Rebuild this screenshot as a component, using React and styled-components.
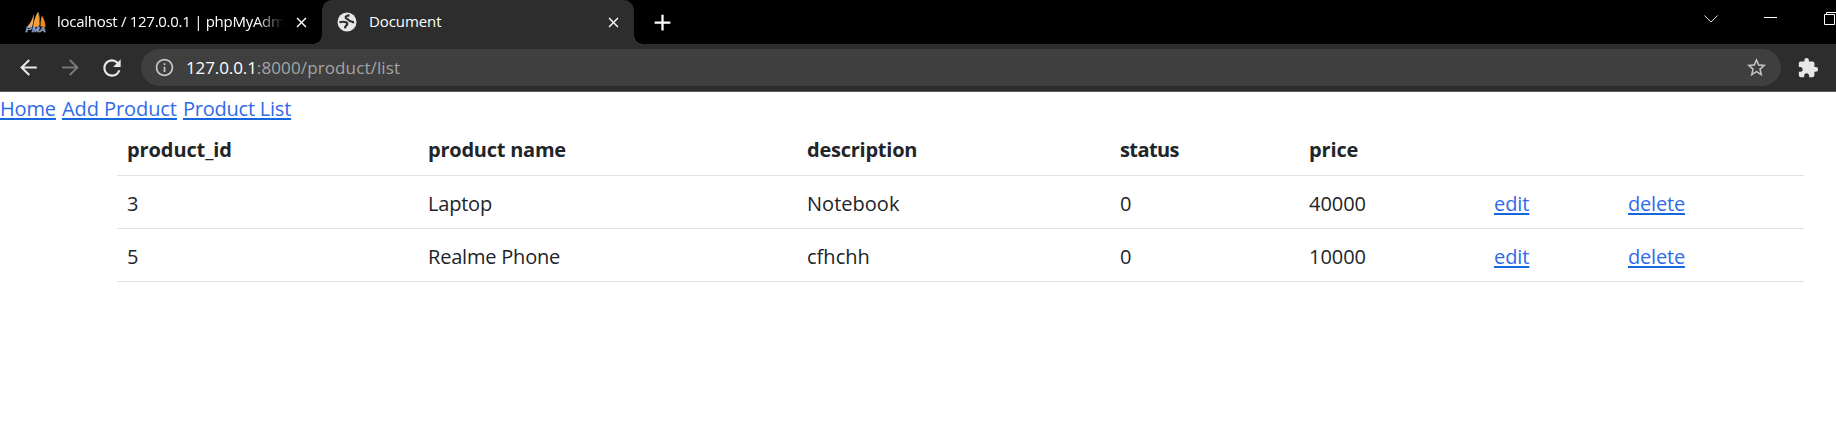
import React from "react";
import styled, { createGlobalStyle, css } from "styled-components";
import {
  MdArrowBack,
  MdArrowForward,
  MdRefresh,
  MdInfoOutline,
  MdStarBorder,
  MdExtension,
  MdClose,
  MdAdd,
} from "react-icons/md";

const GlobalStyle = createGlobalStyle`
  * { box-sizing: border-box; }
  body {
    margin: 0;
    overflow: hidden;
    background: #fff;
    color: #212529;
    font-family: "Open Sans", "Noto Sans", sans-serif;
  }
  svg { display: block; flex: none; }
`;

const Window = styled.div`
  display: flex;
  flex-direction: column;
  width: 1836px;
  height: 435px;
  overflow: hidden;
`;

const TabStrip = styled.div`
  display: flex;
  height: 44px;
  background: #000;
  color: #fff;
`;

const flare = css`
  content: "";
  position: absolute;
  bottom: 0;
  width: 9px;
  height: 9px;
`;

const Tab = styled.div`
  position: relative;
  display: flex;
  align-items: center;
  flex: none;
  width: ${(p) => (p.$active ? 312 : 322)}px;
  padding: 0 12px 0 ${(p) => (p.$active ? 15 : 25)}px;
  border-radius: 10px 10px 0 0;
  background: ${(p) => (p.$active ? "#2d2d2d" : "transparent")};

  ${(p) =>
    p.$active &&
    css`
      &::before {
        ${flare}
        left: -9px;
        background: radial-gradient(circle at 0 0, transparent 8.5px, #2d2d2d 9px);
      }
      &::after {
        ${flare}
        right: -9px;
        background: radial-gradient(circle at 100% 0, transparent 8.5px, #2d2d2d 9px);
      }
    `}
`;

const TabTitle = styled.span`
  flex: 1;
  min-width: 0;
  margin: 0 9px 0 ${(p) => (p.$fade ? 10 : 12)}px;
  padding-bottom: 2px;
  overflow: hidden;
  white-space: nowrap;
  font-size: 15px;
  line-height: 22px;
  letter-spacing: ${(p) => (p.$fade ? -0.28 : -0.08)}px;
  ${(p) =>
    p.$fade &&
    css`
      mask-image: linear-gradient(to right, #000 calc(100% - 28px), transparent);
    `}
`;

const NewTab = styled.div`
  display: flex;
  align-items: center;
  margin-left: 15px;
`;

const WindowControls = styled.div`
  display: flex;
  align-items: flex-start;
  gap: 46px;
  height: 30px;
  margin-left: auto;
  padding-top: 11px;
`;

const Toolbar = styled.div`
  display: flex;
  align-items: center;
  height: 48px;
  padding: 0 16px;
  background: #2d2d2d;
  border-bottom: 1px solid #585858;
  color: #e6e6e6;
`;

const NavButtons = styled.div`
  display: flex;
  align-items: center;
  gap: 16.5px;
  width: 125px;
`;

const NavIcon = styled.span`
  display: flex;
  color: ${(p) => (p.$disabled ? "#777" : "#e8e8e8")};
`;

const AddressBar = styled.div`
  display: flex;
  align-items: center;
  width: 1640px;
  height: 37px;
  padding: 0 13px;
  border-radius: 19px;
  background: #3f3f3f;
  color: #c4c4c4;
`;

const Url = styled.span`
  flex: 1;
  margin-left: 11px;
  padding-top: 1px;
  font-size: 17px;
  line-height: 24px;
  letter-spacing: 0.12px;
  color: #a5a5a5;
`;

const Host = styled.span`
  letter-spacing: -0.1px;
  color: #fff;
`;

const Extensions = styled.div`
  margin-left: 16px;
`;

const Page = styled.main`
  flex: 1;
  font-size: 20px;
  line-height: 30px;
`;

const Nav = styled.nav`
  display: flex;
  gap: 6px;
  height: 31px;
  padding-top: 2px;
`;

const Link = styled.a`
  color: #2f6bea;
  letter-spacing: ${(p) => p.$track || 0}px;
  text-decoration: underline;
  text-decoration-thickness: 2px;
  text-decoration-color: #1467dd;
  text-decoration-skip-ink: none;
  text-underline-offset: 2px;
`;

const Table = styled.div`
  width: 1687px;
  margin-left: 117px;
`;

const Row = styled.div`
  display: grid;
  grid-template-columns: 301px 379px 313px 189px 185px 134px 1fr;
  height: 53px;
  padding-top: ${(p) => (p.$head ? 12 : 13)}px;
  border-bottom: 1px solid #dee2e6;
  font-weight: ${(p) => (p.$head ? 700 : 400)};
`;

const Cell = styled.div`
  padding-left: 10px;
  letter-spacing: ${(p) => p.$track || 0}px;
`;

const PhpMyAdminIcon = () => (
  <svg width="22" height="22" viewBox="0 0 22 22">
    <path d="M8.500 2.500C8 7 6 12 2 16l5 .2C8.500 12 9 7 8.500 2.500Z" fill="#e9a968" />
    <path d="M13 .8C10.500 5 8.800 10 8 16l5.800-.2C14.500 10 14 5 13 .8Z" fill="#f6a13a" />
    <path d="M16.800 4.500c-.9 4-1.200 7-1.400 11l5.200.3C20.400 11.500 19 7.500 16.800 4.500Z" fill="#f08a1c" />
    <path d="M13.200 1.500c1.500 4 1.800 8.500 1.200 13" fill="none" stroke="#b9b3ad" strokeWidth=".6" />
    <text x="0.500" y="21.300" fontSize="7" fontWeight="700" fontStyle="italic" fontFamily="Liberation Sans, sans-serif" textLength="20.500" lengthAdjust="spacingAndGlyphs" fill="#5f70a8" stroke="#b9c0dc" strokeWidth=".35">
      PMA
    </text>
  </svg>
);

const GlobeIcon = () => (
  <svg width="20" height="20" viewBox="0 0 20 20">
    <circle cx="10" cy="10" r="9.500" fill="#e8e8e8" />
    <path
      d="M12.500 3.300C9.800 3.400 8.300 4.500 8.700 5.800c.4 1.300 2.300 1 3 2.300.7 1.500 2.200.9 3.300 1.500.7.400 1.300.8 2.100.5"
      fill="none"
      stroke="#2d2d2d"
      strokeWidth="2.200"
    />
    <path
      d="M2.400 10.200c2.300-.5 5.600-.5 7 .2 1.300.7 1 2 .2 2.700-.9.700-1.500 1.500-1.600 3.300"
      fill="none"
      stroke="#2d2d2d"
      strokeWidth="2.200"
    />
  </svg>
);

const ChevronDown = () => (
  <svg width="14" height="13" viewBox="0 0 14 13" fill="none" stroke="#ddd">
    <path d="M.5 4.500 7 11l6.500-6.500" />
  </svg>
);

const Minimize = () => (
  <svg width="13" height="13" viewBox="0 0 13 13" fill="#fff">
    <path d="M0 6h13v1H0Z" />
  </svg>
);

const Restore = () => (
  <svg width="13" height="15" viewBox="0 0 13 15" fill="none" stroke="#fff">
    <path d="M1.500 3.500h10v10h-10ZM3.500 3.500v-2H13" />
  </svg>
);

const columns = [
  { label: "product_id", head: -0.1, body: 0 },
  { label: "product name", head: -0.24, body: -0.2 },
  { label: "description", head: -0.24, body: 0.02 },
  { label: "status", head: -0.6, body: 0 },
  { label: "price", head: -0.15, body: -0.05 },
];

const products = [
  [3, "Laptop", "Notebook", 0, 40000],
  [5, "Realme Phone", "cfhchh", 0, 10000],
];

export default function App() {
  return (
    <Window>
      <GlobalStyle />
      <TabStrip>
        <Tab>
          <PhpMyAdminIcon />
          <TabTitle $fade>localhost / 127.0.0.1 | phpMyAdmin</TabTitle>
          <MdClose size={17} />
        </Tab>
        <Tab $active>
          <GlobeIcon />
          <TabTitle>Document</TabTitle>
          <MdClose size={17} />
        </Tab>
        <NewTab>
          <MdAdd size={27} />
        </NewTab>
        <WindowControls>
          <ChevronDown />
          <Minimize />
          <Restore />
        </WindowControls>
      </TabStrip>
      <Toolbar>
        <NavButtons>
          <NavIcon><MdArrowBack size={25} /></NavIcon>
          <NavIcon $disabled><MdArrowForward size={25} /></NavIcon>
          <NavIcon><MdRefresh size={26} /></NavIcon>
        </NavButtons>
        <AddressBar>
          <MdInfoOutline size={21} />
          <Url>
            <Host>127.0.0.1</Host>:8000/product/list
          </Url>
          <MdStarBorder size={23} />
        </AddressBar>
        <Extensions>
          <MdExtension size={22} />
        </Extensions>
      </Toolbar>
      <Page>
        <Nav>
          <Link $track={-0.15}>Home</Link>
          <Link $track={-0.07}>Add Product</Link>
          <Link $track={-0.22}>Product List</Link>
        </Nav>
        <Table>
          <Row $head>
            {columns.map((column) => (
              <Cell key={column.label} $track={column.head}>
                {column.label}
              </Cell>
            ))}
          </Row>
          {products.map((product) => (
            <Row key={product[0]}>
              {product.map((value, i) => (
                <Cell key={columns[i].label} $track={columns[i].body}>
                  {value}
                </Cell>
              ))}
              <Cell>
                <Link $track={-0.08}>edit</Link>
              </Cell>
              <Cell>
                <Link $track={-0.2}>delete</Link>
              </Cell>
            </Row>
          ))}
        </Table>
      </Page>
    </Window>
  );
}
